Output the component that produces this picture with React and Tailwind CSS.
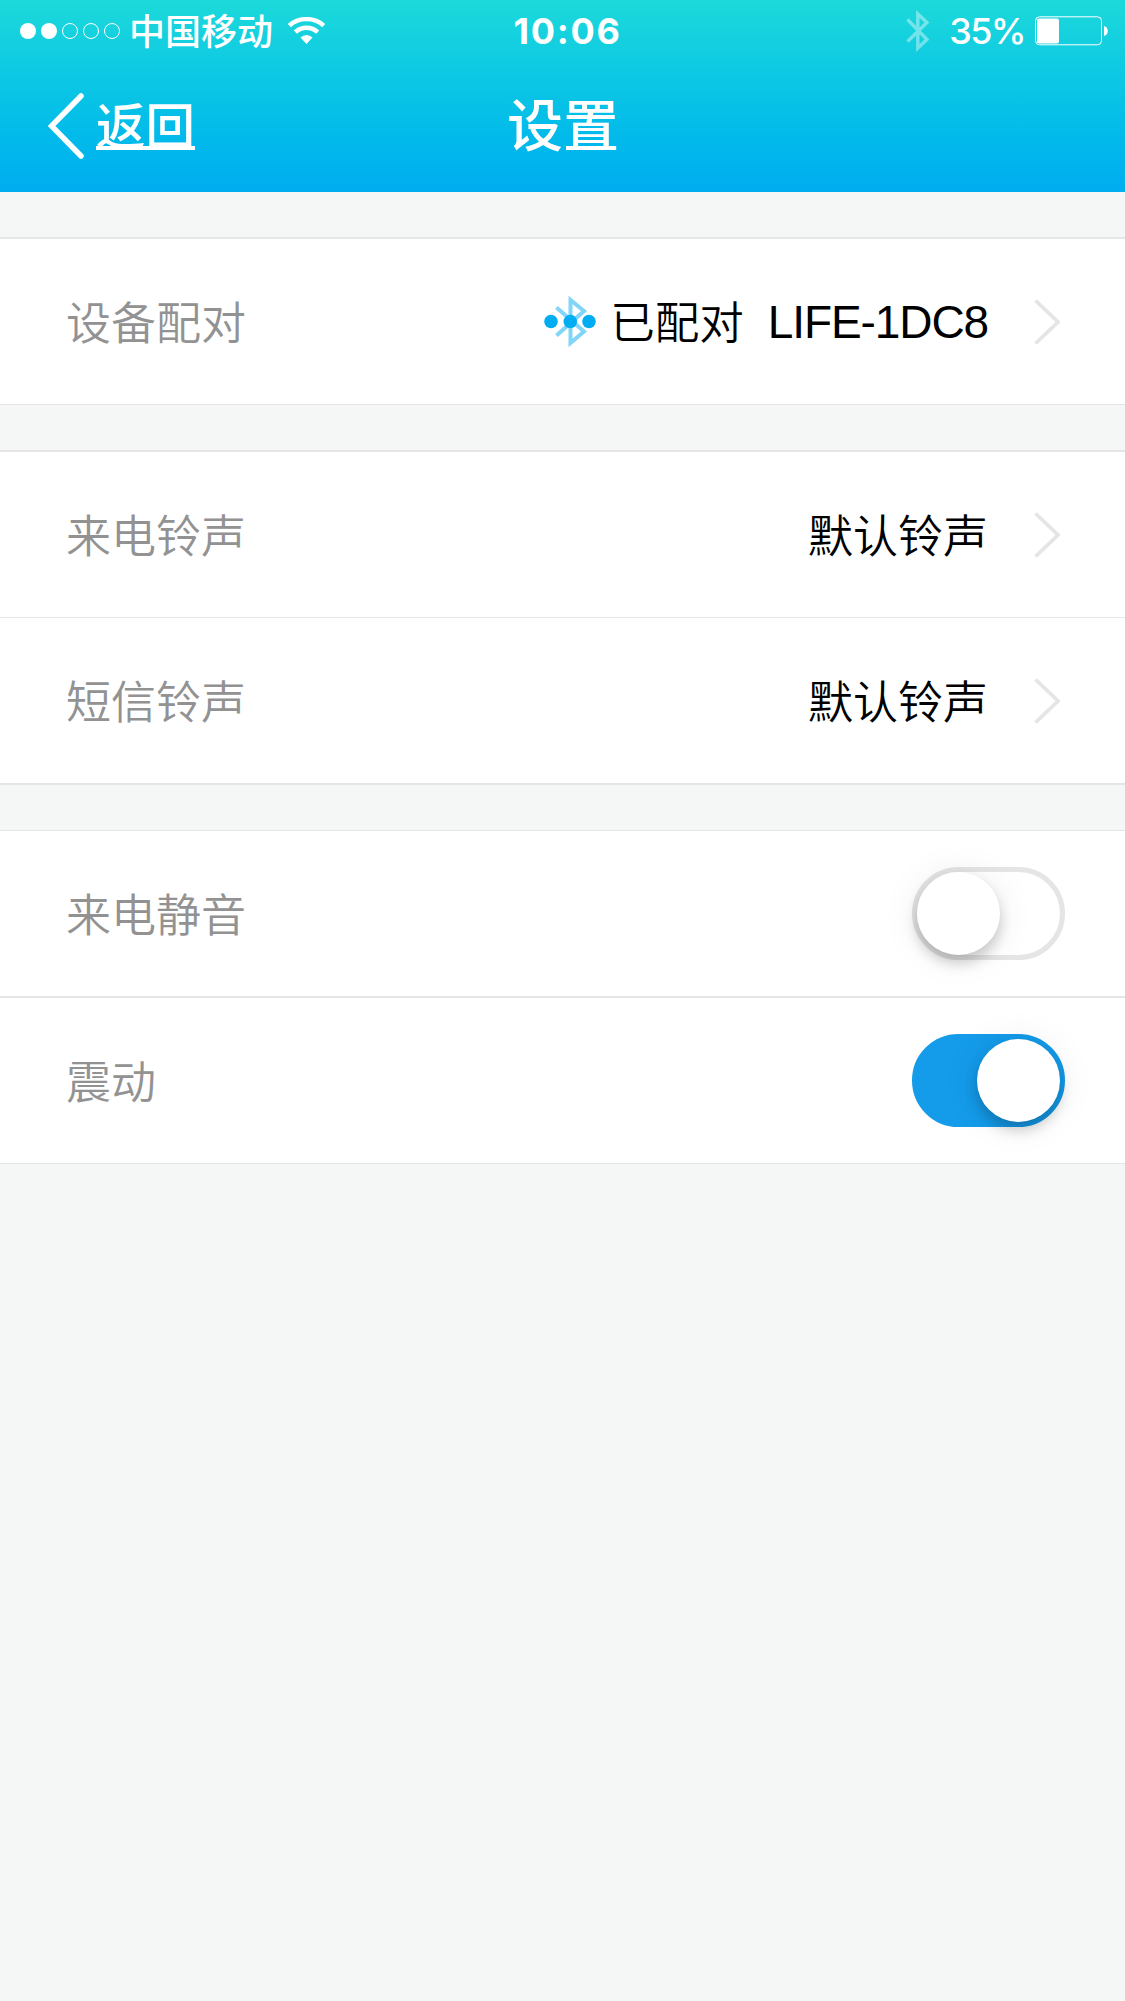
import { useState } from "react";

const CARRIER_SIGNAL = [true, true, false, false, false];

function StatusBar() {
  return (
    <div className="grid h-[62px] grid-cols-3 items-center text-white">
      <div className="flex items-center pl-5">
        <div className="flex gap-[5px]">
          {CARRIER_SIGNAL.map((on, i) => (
            <span
              key={i}
              className={on ? "size-4 rounded-full bg-white" : "size-4 rounded-full border border-white"}
            />
          ))}
        </div>
        <span className="ml-[9px] pt-[3px] text-[36px] leading-none font-medium">中国移动</span>
        <svg className="ml-[15px] h-[28px] w-[37px]" viewBox="0 0 37 28" fill="none">
          <path d="M1.3 8.6a26 26 0 0 1 34.4 0" stroke="white" strokeWidth="4.5" />
          <path d="M7.3 15.2a16.3 16.3 0 0 1 22.4 0" stroke="white" strokeWidth="4.5" />
          <path d="M18.5 27l-6-6.4a8.4 8.4 0 0 1 12 0z" fill="white" />
        </svg>
      </div>

      <div className="pl-[10px] text-center font-['Inter'] text-[36px] leading-none font-bold tracking-[1.7px]">
        10:06
      </div>

      <div className="flex items-center justify-end pr-[17px]">
        <svg className="h-[42px] w-[24px] opacity-40" viewBox="0 0 24 42" fill="none">
          <path d="M1.5 9.5L21 29.5 11.8 38V4L21 12.5 1.5 31.5" stroke="white" strokeWidth="3.4" />
        </svg>
        <span className="ml-[19px] font-['Inter'] text-[36px] leading-none font-medium tracking-[-1.6px]">
          35%
        </span>
        <svg className="ml-[10px] h-[30px] w-[73px]" viewBox="0 0 73 30" fill="none">
          <rect x="0.5" y="0.8" width="66" height="28" rx="4" stroke="white" />
          <rect x="2" y="2.5" width="22" height="25" rx="2" fill="white" />
          <path d="M69 10c5 1 5 9 0 10z" fill="white" />
        </svg>
      </div>
    </div>
  );
}

function Header() {
  return (
    <header className="h-[192px] bg-linear-to-b from-[#1cd9da] to-[#00adf0]">
      <StatusBar />
      <div className="grid h-[126px] grid-cols-3 items-center text-white">
        <a href="#" className="flex items-center pl-[48px]">
          <svg className="h-[68px] w-[37px]" viewBox="0 0 37 68" fill="none">
            <path d="M33 5L3.5 35 33 65" stroke="white" strokeWidth="5.5" strokeLinecap="round" />
          </svg>
          <span className="ml-[11px] border-b-4 border-white pt-[9px] text-[49.5px] leading-[37px] font-medium">
            返回
          </span>
        </a>
        <h1 className="pt-[3px] pl-px text-center text-[56px] leading-none font-medium">设置</h1>
      </div>
    </header>
  );
}

function BluetoothLink() {
  return (
    <svg className="h-[52px] w-[52px]" viewBox="0 0 52 52" fill="none">
      <path d="M12.5 11.5L40 35.5 26.5 47V4L40 15 12.5 39.5" stroke="#80d5f9" strokeWidth="4" />
      <circle cx="7" cy="25.5" r="6.8" fill="#00adf2" />
      <circle cx="26.3" cy="25.5" r="6.8" fill="#00adf2" />
      <circle cx="45" cy="25.5" r="6.8" fill="#00adf2" />
    </svg>
  );
}

function Chevron() {
  return (
    <svg className="ml-[46px] h-[46px] w-[26px]" viewBox="0 0 26 46" fill="none">
      <path d="M1.5 1.5L24 23 1.5 44.5" stroke="#e5e5e5" strokeWidth="3.8" />
    </svg>
  );
}

function Row({ label, className = "", children }) {
  return (
    <div className={`flex h-[165px] items-center bg-white pl-[66px] ${className}`}>
      <span className="pt-[5px] text-[45px] leading-none font-[350] text-[#929292]">{label}</span>
      <div className="ml-auto flex items-center">{children}</div>
    </div>
  );
}

function LinkRow({ label, value, className }) {
  return (
    <Row label={label} className={className}>
      <div className="flex items-center pr-[65px]">
        <span className="pt-[5px] text-[45px] leading-none font-[350] text-black">{value}</span>
        <Chevron />
      </div>
    </Row>
  );
}

function Toggle({ on, onChange }) {
  return (
    <button
      role="switch"
      aria-checked={on}
      onClick={() => onChange(!on)}
      className={`mr-[60px] flex h-[93px] w-[153px] items-center rounded-full border-5 ${
        on ? "justify-end border-[#149bea] bg-[#149bea]" : "justify-start border-[#e5e5e5] bg-white"
      }`}
    >
      <span className="size-[83px] rounded-full bg-white shadow-[0_8px_14px_rgba(0,0,0,0.2),0_2px_38px_rgba(0,0,0,0.08)]" />
    </button>
  );
}

export default function App() {
  const [mute, setMute] = useState(false);
  const [vibrate, setVibrate] = useState(true);

  return (
    <div className="min-h-[2001px] w-[1125px] overflow-hidden bg-[#f5f7f6] font-['Liberation_Sans','Noto_Sans_CJK_SC',sans-serif]">
      <Header />

      {/* Device pairing */}
      <section className="mt-[45px] border-t-2 border-b border-[#e5e5e5]">
        <Row label="设备配对">
          <div className="flex items-center pr-[65px] text-[45px] leading-none text-black">
            <BluetoothLink />
            <span className="ml-[14px] pt-[5px] text-[44.5px] font-[350]">已配对</span>
            <span className="ml-[24px] pt-px text-[46px] tracking-[-1.1px]">LIFE-1DC8</span>
            <Chevron />
          </div>
        </Row>
      </section>

      {/* Ringtones */}
      <section className="mt-[45px] border-t-2 border-b-2 border-[#e5e5e5]">
        <LinkRow label="来电铃声" value="默认铃声" />
        <LinkRow label="短信铃声" value="默认铃声" className="box-content border-t border-[#e5e5e5]" />
      </section>

      {/* Switches */}
      <section className="mt-[45px] border-t border-b border-[#e5e5e5]">
        <Row label="来电静音">
          <Toggle on={mute} onChange={setMute} />
        </Row>
        <Row label="震动" className="box-content border-t-2 border-[#e5e5e5]">
          <Toggle on={vibrate} onChange={setVibrate} />
        </Row>
      </section>
    </div>
  );
}
